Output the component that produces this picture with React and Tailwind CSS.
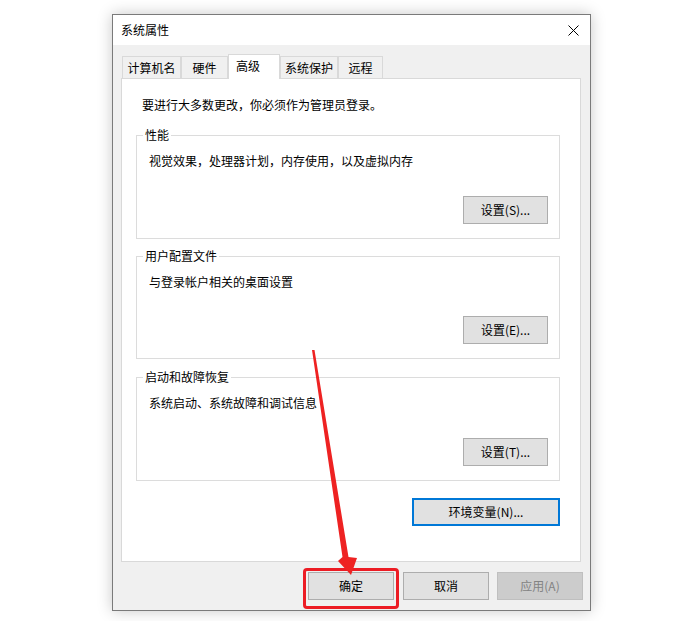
import React from "react";

function Btn({ children, className = "" }) {
  return (
    <div
      className={
        "h-[28px] flex items-center justify-center bg-[#e1e1e1] border border-[#adadad] text-[12px] leading-[16px] text-black " +
        className
      }
    >
      {children}
    </div>
  );
}

function Group({ title, text, btn, h, className = "" }) {
  return (
    <div
      className={
        "relative ml-[14px] w-[424px] border border-[#dcdcdc] flex flex-col " + h + " " + className
      }
    >
      <div className="absolute left-[6px] -top-[9px] px-[2px] bg-white text-[12px] leading-[16px]">
        {title}
      </div>
      <div className="pt-[17px] pl-[12px] text-[12px] leading-[16px]">{text}</div>
      <Btn className="mt-auto self-end mr-[11px] mb-[14px] w-[85px]">{btn}</Btn>
    </div>
  );
}

function Tab({ label, w, selected }) {
  if (selected) {
    return (
      <div
        className={
          "relative z-10 -mb-px h-[25px] bg-white border border-b-0 border-[#d9d9d9] pl-[7px] pt-[3px] text-[12px] leading-[16px] " +
          w
        }
      >
        {label}
      </div>
    );
  }
  return (
    <div
      className={
        "h-[22px] bg-[#f0f0f0] border border-b-0 border-[#d9d9d9] flex items-center justify-center text-[12px] leading-[16px] " +
        w
      }
    >
      {label}
    </div>
  );
}

export default function App() {
  return (
    <div className="relative w-[692px] h-[621px] overflow-hidden bg-white pl-[112px] pt-[14px] text-black font-['Noto_Sans_CJK_SC','Noto_Sans',sans-serif]">
      <div className="w-[479px] h-[597px] border border-[#7a7a7a] bg-[#f0f0f0] flex flex-col shadow-[0_0_14px_rgba(0,0,0,0.22)]">
        {/* title bar */}
        <div className="h-[30px] bg-white flex items-center justify-between pl-[8px]">
          <span className="text-[12px] leading-[16px]">系统属性</span>
          <svg width="11" height="11" viewBox="0 0 11 11" className="mr-[11px]">
            <path d="M0.5 0.5 L10.5 10.5 M10.5 0.5 L0.5 10.5" stroke="#000" strokeWidth="1" />
          </svg>
        </div>
        {/* body */}
        <div className="flex-1 flex flex-col pt-[9px] pl-[8px] pr-[9px]">
          <div className="h-[24px] flex items-end pl-[1px]">
            <Tab label="计算机名" w="w-[59px]" />
            <Tab label="硬件" w="w-[47px]" />
            <Tab label="高级" w="w-[52px]" selected />
            <Tab label="系统保护" w="w-[58px]" />
            <Tab label="远程" w="w-[45px]" />
          </div>
          <div className="h-[484px] bg-white border border-[#d9d9d9] flex flex-col">
            <div className="pt-[18px] pl-[20px] text-[12px] leading-[16px]">
              要进行大多数更改，你必须作为管理员登录。
            </div>
            <Group
              className="mt-[22px]"
              h="h-[104px]"
              title="性能"
              text="视觉效果，处理器计划，内存使用，以及虚拟内存"
              btn="设置(S)..."
            />
            <Group
              className="mt-[17px]"
              h="h-[103px]"
              title="用户配置文件"
              text="与登录帐户相关的桌面设置"
              btn="设置(E)..."
            />
            <Group
              className="mt-[18px]"
              h="h-[104px]"
              title="启动和故障恢复"
              text="系统启动、系统故障和调试信息"
              btn="设置(T)..."
            />
            <div className="mt-[17px] ml-[290px] w-[148px] h-[28px] flex items-center justify-center bg-[#e1e1e1] border-2 border-[#0078d7] text-[12px] leading-[16px]">
              环境变量(N)...
            </div>
          </div>
          <div className="mt-[10px] flex justify-end pr-[-2px]">
            <Btn className="w-[86px]">确定</Btn>
            <Btn className="w-[86px] ml-[9px]">取消</Btn>
            <div className="w-[86px] ml-[8px] mr-[-2px] h-[28px] flex items-center justify-center bg-[#cccccc] border border-[#bfbfbf] text-[12px] leading-[16px] text-[#838383]">
              应用(A)
            </div>
          </div>
        </div>
      </div>

      {/* red highlight box */}
      <div className="absolute left-[303px] top-[568px] w-[96px] h-[41px] border-[3px] border-[#ec1c24] rounded-[4px]" />

      {/* red arrow */}
      <svg
        className="absolute left-0 top-0 pointer-events-none"
        width="692"
        height="621"
        viewBox="0 0 692 621"
      >
        <polygon
          points="312,350 314.5,350 348.5,557 357,558 351,575 338,561 342.5,557"
          fill="#ee2222"
        />
      </svg>
    </div>
  );
}
